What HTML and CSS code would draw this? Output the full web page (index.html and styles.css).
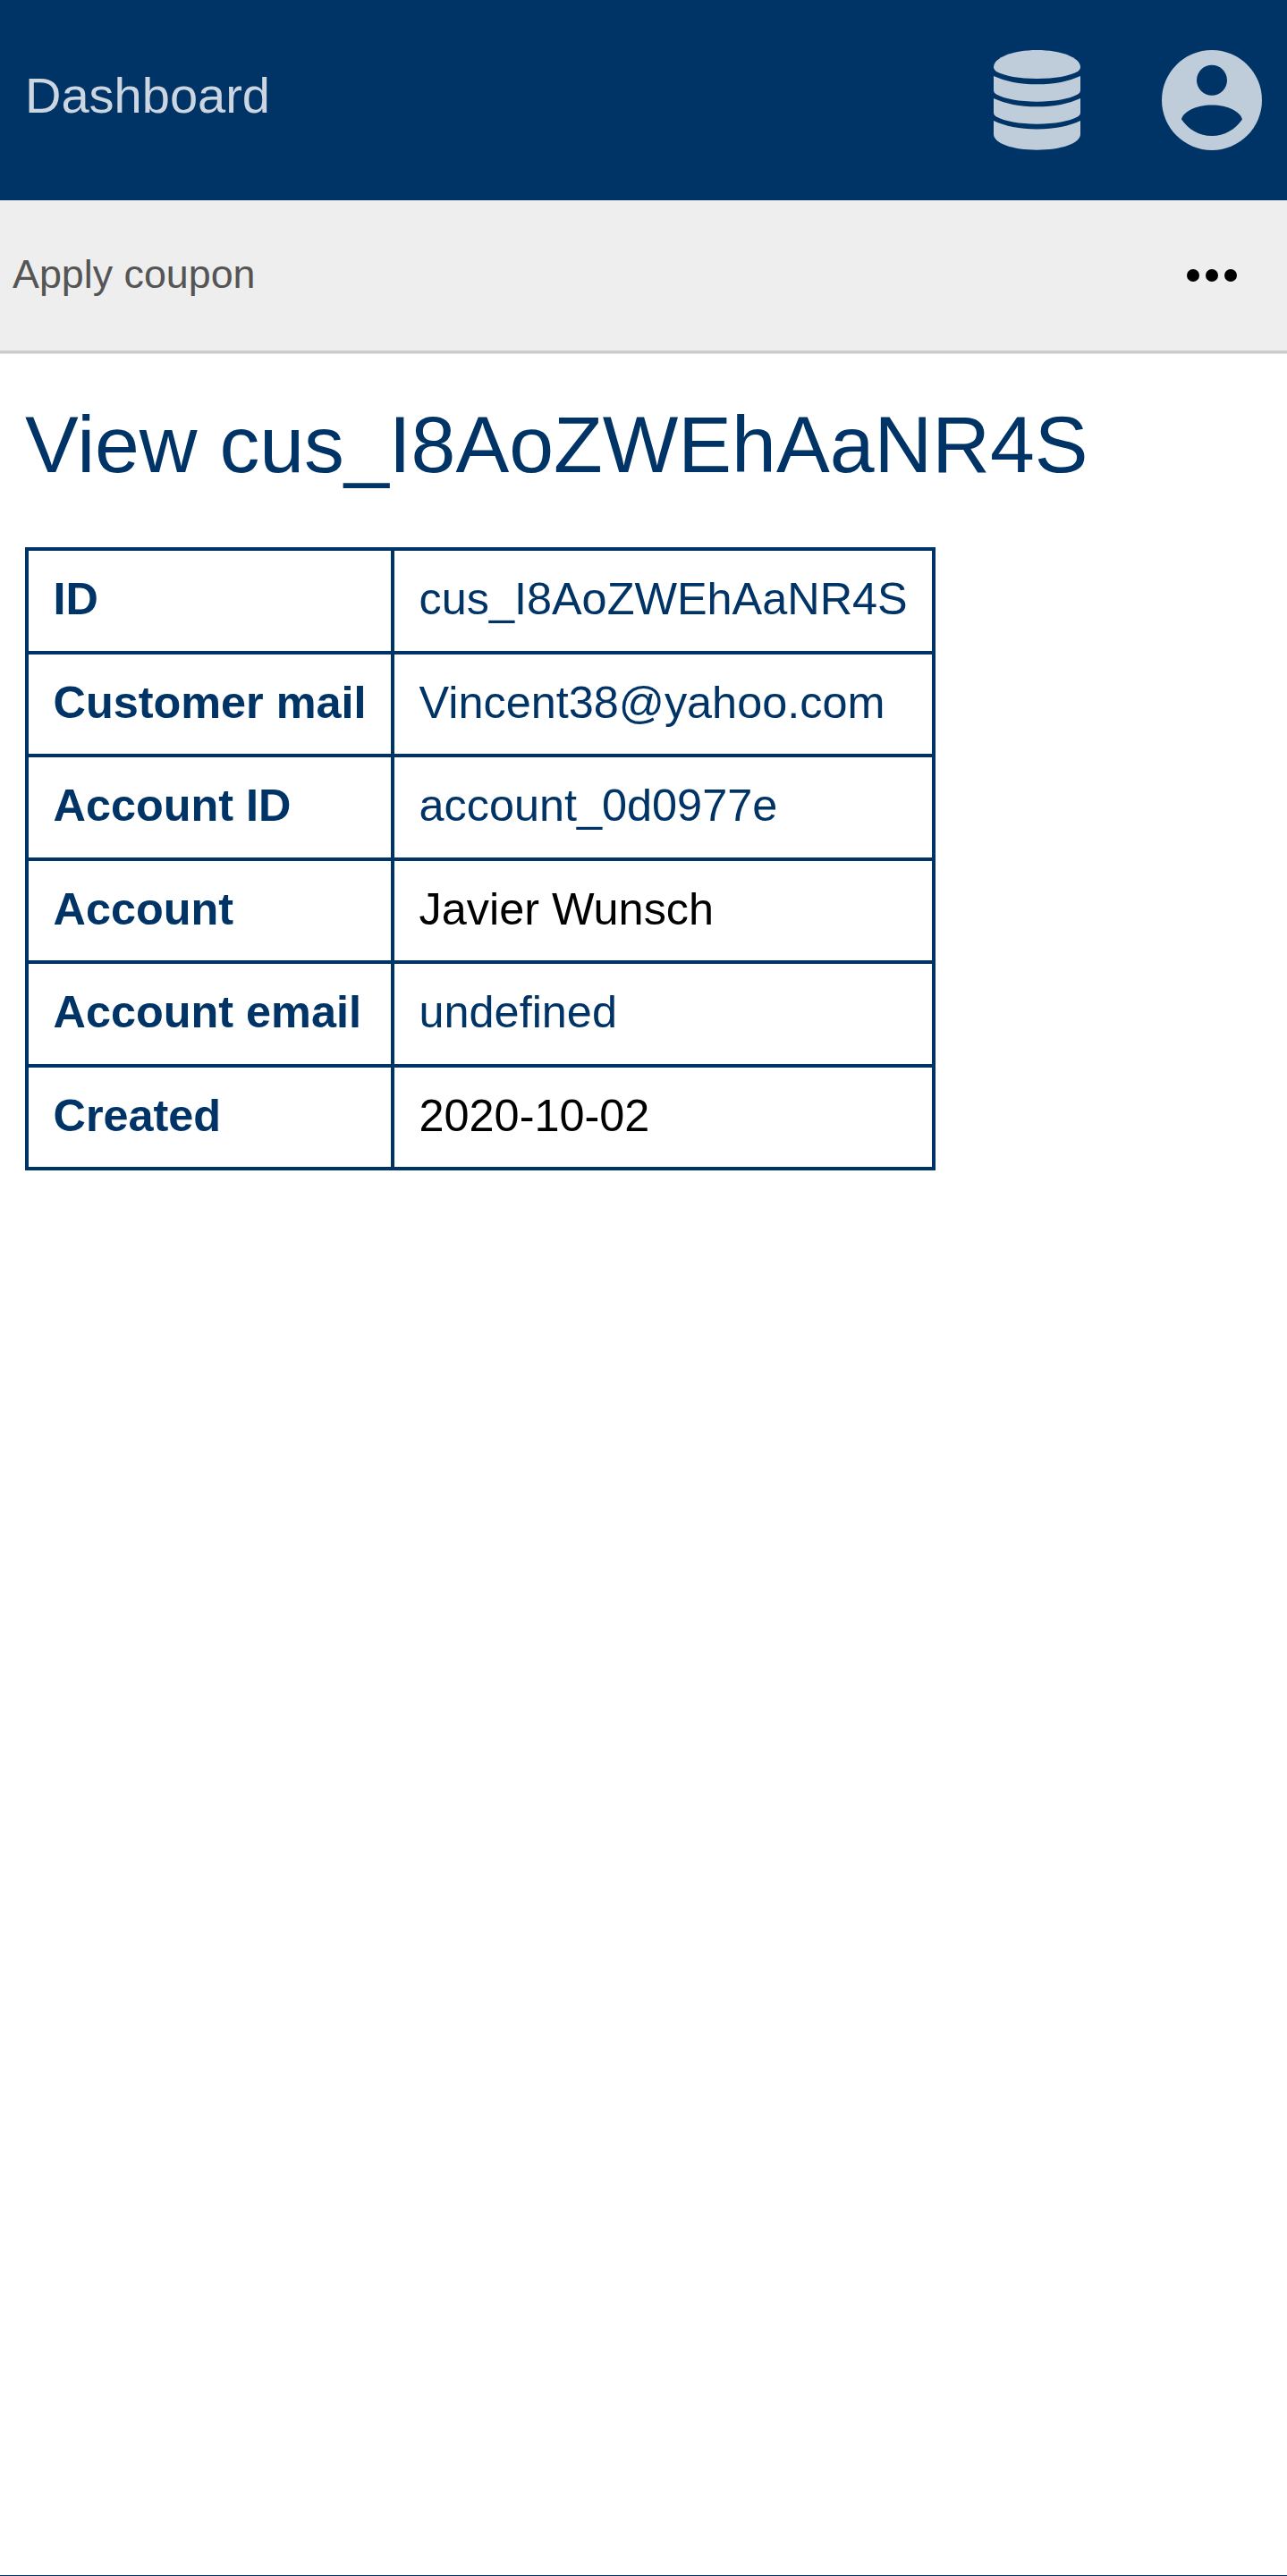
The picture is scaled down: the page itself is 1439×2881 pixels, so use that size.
FILE: index.html
```html
<!DOCTYPE html>
<html lang="en">
<head>
<meta charset="utf-8">
<title>View cus_I8AoZWEhAaNR4S</title>
<link rel="stylesheet" href="styles.css">
</head>
<body>
<header class="topbar">
  <a class="brand" href="#">Dashboard</a>
  <div class="top-icons">
    <svg class="icon-db" viewBox="0 0 97 112" aria-hidden="true">
      <path d="M48.500 0C21.700 0 0 8.500 0 19C0 21 1 22 3 24C12 29 29 32 48.500 32S85 29 94 24C96 22 97 21 97 19C97 8.500 75.300 0 48.500 0Z"/>
      <path d="M0 29C13 35 29 38.300 48.500 38.300S84 35 97 29V45C97 47 96 48 94 49.500C85 54.500 68 57.700 48.500 57.700S12 54.500 3 49.500C1 48 0 47 0 45Z"/>
      <path d="M0 54C13 60 29 63.300 48.500 63.300S84 60 97 54V70C97 72 96 73 94 74.500C85 79.500 68 82.700 48.500 82.700S12 79.500 3 74.500C1 73 0 72 0 70Z"/>
      <path d="M0 79C13 85 29 88.500 48.500 88.500S84 85 97 79V94C97 104.500 75.300 111.700 48.500 111.700S0 104.500 0 94Z"/>
    </svg>
    <svg class="icon-user" viewBox="0 0 112 112" aria-hidden="true">
      <path fill-rule="evenodd" d="M56 0a56 56 0 1 0 0 112A56 56 0 0 0 56 0Zm0 16.700a17 17 0 1 1 0 34 17 17 0 0 1 0-34ZM56 61.500C74 61.500 88 69 90 77.500C82 89 70 96 56 96S30 89 22 77.500C24 69 38 61.500 56 61.500Z"/>
    </svg>
  </div>
</header>
<nav class="toolbar">
  <a class="tool-link" href="#">Apply coupon</a>
  <div class="more" aria-label="More"><span class="dot"></span><span class="dot"></span><span class="dot"></span></div>
</nav>
<main class="content">
  <h1 class="title">View cus_I8AoZWEhAaNR4S</h1>
  <table class="details">
    <tr><th>ID</th><td><a href="#">cus_I8AoZWEhAaNR4S</a></td></tr>
    <tr><th>Customer mail</th><td><a href="#">Vincent38@yahoo.com</a></td></tr>
    <tr><th>Account ID</th><td><a href="#">account_0d0977e</a></td></tr>
    <tr><th>Account</th><td>Javier Wunsch</td></tr>
    <tr><th>Account email</th><td><a href="#">undefined</a></td></tr>
    <tr><th>Created</th><td>2020-10-02</td></tr>
  </table>
</main>
</body>
</html>
```
FILE: styles.css
```css
* { box-sizing: border-box; }
html, body { margin: 0; padding: 0; }
body {
  height: 2881px;
  background: #fff;
  font-family: "Liberation Sans", Arial, sans-serif;
  display: flex;
  flex-direction: column;
  border-bottom: 1px solid #003366;
}
a { color: inherit; text-decoration: none; }
.topbar {
  height: 224px;
  flex: none;
  background: #003366;
  display: flex;
  align-items: center;
  justify-content: space-between;
  padding: 0 28px;
}
.brand { color: #ccd6e0; font-size: 56px; padding-bottom: 12px; }
.top-icons { display: flex; align-items: center; gap: 91px; }
.top-icons svg { fill: #bfccd9; display: block; height: 112px; }
.icon-db { width: 97px; }
.icon-user { width: 112px; }
.toolbar {
  height: 171px;
  flex: none;
  background: #eeeeee;
  border-bottom: 3px solid #cccccc;
  box-shadow: 0 1px 0 #e4e4e4;
  display: flex;
  align-items: center;
  justify-content: space-between;
  padding: 0 56px 0 14px;
}
.tool-link { color: #555555; font-size: 44.8px; padding-bottom: 3px; }
.more { display: flex; gap: 7px; }
.dot { width: 14px; height: 14px; border-radius: 50%; background: #000; }
.content { padding: 0 28px; }
.title {
  margin: 51px 0 63px;
  color: #003366;
  font-size: 89.6px;
  font-weight: 400;
  line-height: 103px;
}
.details { border-collapse: collapse; font-size: 50.4px; line-height: 58.5px; }
.details th, .details td {
  border: 4px solid #003366;
  padding: 25px 27.5px 28px;
  text-align: left;
  white-space: nowrap;
}
.details th { color: #003366; font-weight: 700; }
.details td { color: #000; }
.details td a { color: #003366; }
```
